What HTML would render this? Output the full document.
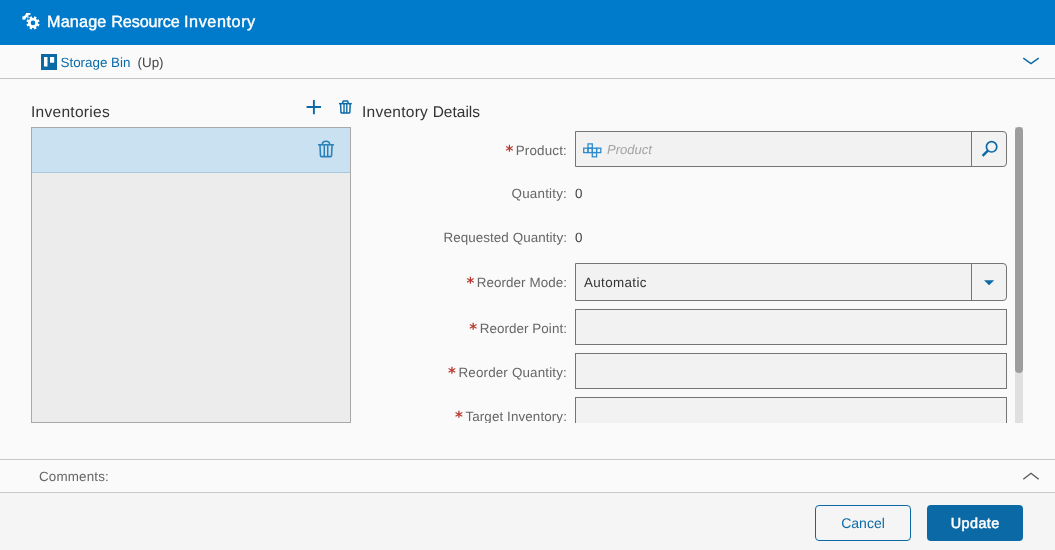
<!DOCTYPE html>
<html><head><meta charset="utf-8"><title>Manage Resource Inventory</title>
<style>
*{box-sizing:border-box;margin:0;padding:0}
html,body{width:1055px;height:550px;overflow:hidden;background:#fafafa;-webkit-font-smoothing:antialiased;text-rendering:geometricPrecision;font-family:"Liberation Sans",sans-serif;color:#333}
.abs{position:absolute}
#wrap{position:absolute;left:0;top:0;width:1055px;height:550px;will-change:transform}
#hdr{left:0;top:0;width:1055px;height:45px;background:#007acb}
#title{left:47px;top:11px;font-size:16.2px;-webkit-text-stroke:.4px #fff;line-height:22px;color:#fff;white-space:pre}
#sub{left:0;top:45px;width:1055px;height:34px;border-bottom:1px solid #c4c4c4;background:#fafafa}
#sbtxt{left:60.5px;top:55px;font-size:13.4px;line-height:16px;color:#0b6aa6;white-space:nowrap}
#uptxt{left:137.5px;top:55px;font-size:13.4px;line-height:16px;color:#444;white-space:nowrap}
#invh{left:31px;top:103px;font-size:15.5px;letter-spacing:.29px;line-height:20px;color:#333;white-space:nowrap}
#deth{left:362px;top:103px;font-size:15.5px;line-height:20px;color:#333;white-space:pre}
#list{left:31px;top:127px;width:320px;height:296px;background:#ececec;border:1px solid #a9a9a9}
#row{left:0;top:0;width:318px;height:45px;background:#c9e1f0;border-bottom:1px solid #a6c8e0}
.lbl{position:absolute;right:488px;font-size:13.4px;line-height:16px;color:#666;white-space:nowrap;text-align:right}
.lbl b{position:absolute;right:100%;margin-right:2.5px;top:-2px;font:700 15px/20px "DejaVu Sans",sans-serif;letter-spacing:0;color:#b5382f}
.inp{position:absolute;left:575px;width:432px;height:36px;background:#f2f2f2;border:1px solid #747474}
.val{position:absolute;left:575px;font-size:13.4px;line-height:16px;color:#444}
#clip{left:0;top:0;width:1055px;height:423px;overflow:hidden}
.sep{position:absolute;left:971px;width:1px;background:#747474}
.ph{position:absolute;left:607px;top:142px;font-size:13px;line-height:16px;font-style:italic;color:#a3a3a3}
#sbtrack{left:1015px;top:127px;width:8px;height:296px;background:#e0e0e0}
#sbthumb{left:1015px;top:127px;width:8px;height:246px;background:#9d9d9d;border-radius:4px}
#cmt{left:0;top:459px;width:1055px;height:34px;border-top:1px solid #c8c8c8;border-bottom:1px solid #c8c8c8;background:#fafafa}
#cmttxt{left:39px;top:469px;font-size:13.4px;letter-spacing:.16px;line-height:16px;color:#666}
#foot{left:0;top:493px;width:1055px;height:57px;background:#f5f5f5}
#cancel{left:815px;top:505px;width:96px;height:36px;border:1px solid #0b6aa6;border-radius:4px;background:transparent;color:#0b6aa6;font-size:14px;line-height:34px;text-align:center}
#update{left:927px;top:505px;width:96px;height:36px;border-radius:4px;background:#0b6aa6;color:#fff;font-size:14.4px;line-height:38px;text-align:center;-webkit-text-stroke:.5px #fff;letter-spacing:.45px;text-indent:.45px}
</style></head><body><div id="wrap">
<div id="hdr" class="abs"></div>
<svg id="gear" class="abs" style="left:0;top:0" width="60" height="45" viewBox="0 0 60 45"><g fill="#fff"><rect x="31.75" y="16.3" width="2.5" height="3.2" transform="rotate(22.5 33 22.9)"/><rect x="31.75" y="16.3" width="2.5" height="3.2" transform="rotate(67.5 33 22.9)"/><rect x="31.75" y="16.3" width="2.5" height="3.2" transform="rotate(112.5 33 22.9)"/><rect x="31.75" y="16.3" width="2.5" height="3.2" transform="rotate(157.5 33 22.9)"/><rect x="31.75" y="16.3" width="2.5" height="3.2" transform="rotate(202.5 33 22.9)"/><rect x="31.75" y="16.3" width="2.5" height="3.2" transform="rotate(247.5 33 22.9)"/><rect x="31.75" y="16.3" width="2.5" height="3.2" transform="rotate(292.5 33 22.9)"/><rect x="31.75" y="16.3" width="2.5" height="3.2" transform="rotate(337.5 33 22.9)"/><path fill-rule="evenodd" d="M28,22.9a5,5 0 1,0 10,0a5,5 0 1,0 -10,0z M30.7,22.9a2.3,2.3 0 1,1 4.6,0a2.3,2.3 0 1,1 -4.6,0z"/></g>
<g fill="#fff"><rect x="26" y="13" width="4.4" height="1.9"/><rect x="22.4" y="16.3" width="3.1" height="3.3"/><path d="M26.2,13.6 L28.6,14.9 L25.6,18.4 L23.6,17 Z"/><rect x="27.1" y="15.4" width="1.5" height="2.9" opacity=".75"/></g></svg>
<div id="title" class="abs"><span style="letter-spacing:.17px">Manage </span><span style="letter-spacing:-.11px">Resource </span><span style="letter-spacing:.58px">Inventory</span></div>
<div id="sub" class="abs"></div>
<svg id="sbicon" class="abs" style="left:41px;top:54px" width="16" height="16" viewBox="0 0 16 16"><rect width="16" height="16" fill="#0b6aa6"/><rect x="3" y="3" width="3.5" height="9.5" fill="#fff"/><rect x="9" y="3" width="4.2" height="5.7" fill="#fff"/></svg><svg id="chevd" class="abs" style="left:1020px;top:52px" width="22" height="18" viewBox="1020 52 22 18"><path d="M1023.3,58.2 L1031,63.6 L1038.7,58.2" fill="none" stroke="#0b6aa6" stroke-width="1.5"/></svg>
<div id="sbtxt" class="abs">Storage Bin</div>
<div id="uptxt" class="abs">(Up)</div>
<svg id="plus" class="abs" style="left:306px;top:99px" width="16" height="16" viewBox="306 99 16 16"><path d="M306.6,107 H321 M313.9,100 V114.2" fill="none" stroke="#0b6aa6" stroke-width="1.9"/></svg><svg id="tr1" class="abs" style="left:339.3px;top:100px" width="12.8" height="14" viewBox="0 0 13 14"><g fill="none" stroke="#0b6aa6" stroke-width="1.5"><path d="M0,3.6 H13"/><path d="M3.5,3.4 L4.3,0.8 H8.7 L9.5,3.4" stroke-linejoin="round"/><path d="M1.6,3.6 L2,12.5 Q2.05,13.2 2.8,13.2 H10.2 Q10.95,13.2 11,12.5 L11.4,3.6"/><path d="M5.1,4 V13 M7.9,4 V13" stroke-width="1.4"/></g></svg>
<div id="invh" class="abs">Inventories</div>
<div id="deth" class="abs"><span style="letter-spacing:.26px">Inventory </span><span style="letter-spacing:0">Details</span></div>
<div id="list" class="abs"><div id="row" class="abs"></div></div>
<svg id="tr2" class="abs" style="left:318px;top:140px" width="16" height="18" viewBox="0 0 13 14"><g fill="none" stroke="#2a80ba" stroke-width="1.25"><path d="M0,3.6 H13"/><path d="M3.4,3.5 Q3.6,0.7 6.5,0.7 Q9.4,0.7 9.6,3.5"/><path d="M1.6,3.6 L2,12.5 Q2.05,13.2 2.8,13.2 H10.2 Q10.95,13.2 11,12.5 L11.4,3.6"/><path d="M5.1,4 V13 M7.9,4 V13" stroke-width="1.2"/></g></svg>
<div id="clip" class="abs">
<div class="lbl" id="l1" style="top:143px;letter-spacing:.17px"><b>*</b>Product:</div>
<div class="inp" id="i1" style="top:131px;height:36px;border-radius:0 4px 4px 0"></div>
<div class="sep" style="top:131px;height:36px"></div>
<div class="ph" id="ph">Product</div>
<svg id="prodicon" class="abs" style="left:583px;top:143px" width="19" height="15" viewBox="583 143 19 15"><g fill="none" stroke="#2f8ccc" stroke-width="1.3"><rect x="583.7" y="148.2" width="4.3" height="4.4"/><rect x="588" y="148.2" width="4.3" height="4.4"/><rect x="592.3" y="148.2" width="4.3" height="4.4"/><rect x="596.6" y="148.2" width="4.2" height="4.4"/><rect x="588" y="143.9" width="4.3" height="4.3"/><rect x="592.3" y="152.6" width="4.3" height="4.2"/></g></svg><svg id="mag" class="abs" style="left:980px;top:139px" width="20" height="20" viewBox="980 139 20 20"><circle cx="991.6" cy="146.8" r="5.2" fill="none" stroke="#0b6aa6" stroke-width="1.7"/><path d="M987.9,150.6 L982.6,155.9" stroke="#0b6aa6" stroke-width="2.4" fill="none"/></svg>
<div class="lbl" id="l2" style="top:186px;letter-spacing:.2px">Quantity:</div>
<div class="val" id="v2" style="top:186px">0</div>
<div class="lbl" id="l3" style="top:230px;letter-spacing:.08px">Requested Quantity:</div>
<div class="val" id="v3" style="top:230px">0</div>
<div class="lbl" id="l4" style="top:275px;letter-spacing:.07px"><b>*</b>Reorder Mode:</div>
<div class="inp" id="i4" style="top:263px;height:38px;border-radius:0 4px 4px 0"></div>
<div class="sep" style="top:263px;height:38px"></div>
<div class="val" id="v4" style="top:275px;left:584px;color:#333;letter-spacing:.36px">Automatic</div>
<svg id="arrow" class="abs" style="left:983px;top:279px" width="12" height="8" viewBox="983 279 12 8"><path d="M984,280.2 H994.2 L989.1,285.3 Z" fill="#0b6aa6"/></svg>
<div class="lbl" id="l5" style="top:321px;letter-spacing:.07px"><b>*</b>Reorder Point:</div>
<div class="inp" id="i5" style="top:309px;height:36px"></div>
<div class="lbl" id="l6" style="top:365px;letter-spacing:.17px"><b>*</b>Reorder Quantity:</div>
<div class="inp" id="i6" style="top:353px;height:36px"></div>
<div class="lbl" id="l7" style="top:409px;letter-spacing:.11px"><b>*</b>Target Inventory:</div>
<div class="inp" id="i7" style="top:397px;height:36px"></div>
</div>
<div id="sbtrack" class="abs"></div><div id="sbthumb" class="abs"></div>
<div id="cmt" class="abs"></div>
<svg id="chevu" class="abs" style="left:1020px;top:466px" width="22" height="18" viewBox="1020 466 22 18"><path d="M1023.3,479.2 L1031,473.2 L1038.7,479.2" fill="none" stroke="#555" stroke-width="1.3"/></svg>
<div id="cmttxt" class="abs">Comments:</div>
<div id="foot" class="abs"></div>
<div id="cancel" class="abs">Cancel</div>
<div id="update" class="abs">Update</div>
</div></body></html>
